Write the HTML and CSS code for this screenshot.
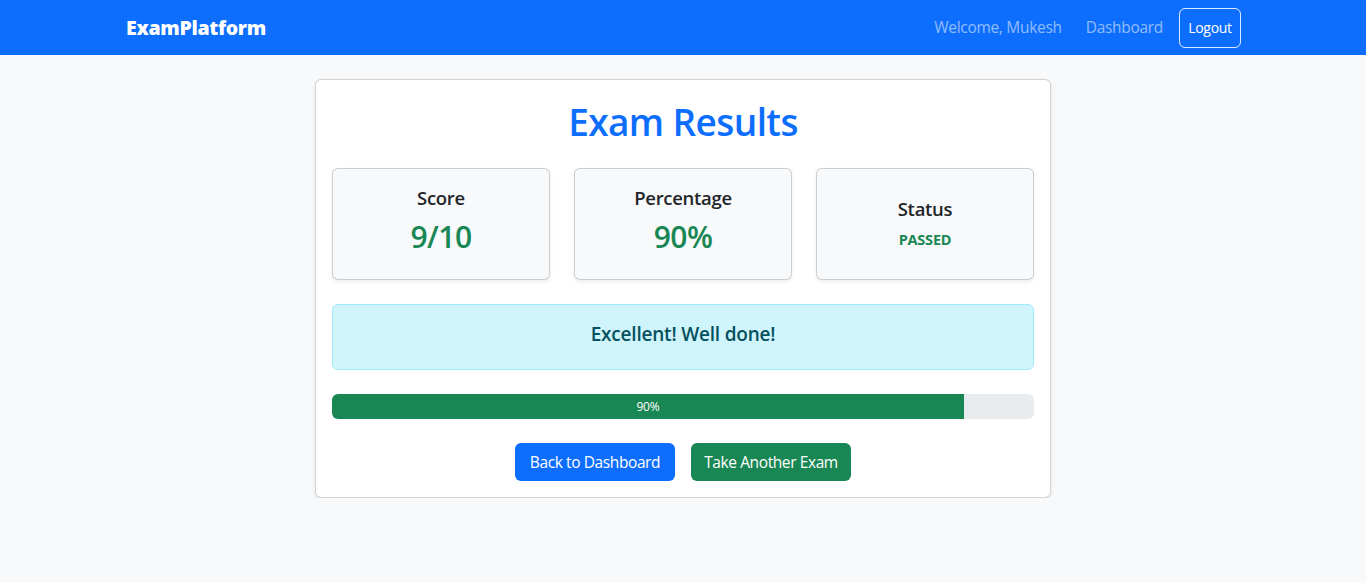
FILE: index.html
```html
<!DOCTYPE html>
<html lang="en">
<head>
<meta charset="utf-8">
<title>Exam Results</title>
<link rel="stylesheet" href="styles.css">
</head>
<body>
<nav class="navbar">
  <div class="container nav-inner">
    <a class="brand" href="#">ExamPlatform</a>
    <div class="nav-right">
      <span class="nav-text">Welcome, Mukesh</span>
      <a class="nav-link" href="#">Dashboard</a>
      <button class="btn-logout">Logout</button>
    </div>
  </div>
</nav>
<main class="container">
  <div class="card">
    <h1 class="title">Exam Results</h1>
    <div class="stats">
      <div class="stat">
        <h5 class="stat-label">Score</h5>
        <h2 class="stat-value">9/10</h2>
      </div>
      <div class="stat">
        <h5 class="stat-label">Percentage</h5>
        <h2 class="stat-value">90%</h2>
      </div>
      <div class="stat stat-center">
        <h5 class="stat-label">Status</h5>
        <p class="stat-status">PASSED</p>
      </div>
    </div>
    <div class="alert">
      <h4 class="alert-text">Excellent! Well done!</h4>
    </div>
    <div class="progress">
      <div class="progress-bar" style="width: 90%">90%</div>
    </div>
    <div class="actions">
      <a class="btn btn-primary" href="#">Back to Dashboard</a>
      <a class="btn btn-success" href="#">Take Another Exam</a>
    </div>
  </div>
</main>
</body>
</html>
```
FILE: styles.css
```css
* { box-sizing: border-box; }
html, body { margin: 0; }
body {
  font-family: "Open Sans", "Noto Sans", "Liberation Sans", sans-serif;
  font-size: 16px;
  line-height: 1.5;
  color: #212529;
  background: #f8f9fa;
}
h1, h2, h4, h5, p { margin: 0; font-weight: 500; }
a { text-decoration: none; }

.container {
  width: 1140px;
  margin: 0 auto;
  padding: 0 12px;
}

.navbar {
  background: #0d6efd;
  height: 55px;
}
.nav-inner {
  height: 55px;
  display: flex;
  align-items: center;
  justify-content: space-between;
}
.brand {
  color: #fff;
  font-weight: 800;
  font-size: 19.5px;
  letter-spacing: -0.3px;
  margin-left: 1px;
}
.nav-right {
  display: flex;
  align-items: center;
}
.nav-text, .nav-link {
  color: rgba(255, 255, 255, 0.55);
  font-size: 15.5px;
  letter-spacing: -0.3px;
}
.nav-text { margin-right: 24px; }
.nav-link { margin-right: 16px; }
.btn-logout {
  font-family: inherit;
  font-size: 14px;
  letter-spacing: -0.3px;
  color: #fff;
  background: transparent;
  border: 1px solid rgba(255, 255, 255, 0.85);
  border-radius: 6px;
  height: 40px;
  width: 62px;
  padding: 0;
}

.card {
  margin: 24px 0 0 190px;
  width: 736px;
  background: #fff;
  border: 1px solid rgba(0, 0, 0, 0.175);
  border-radius: 6px;
  box-shadow: 0 2px 4px rgba(0, 0, 0, 0.075);
  padding: 16px;
}
.title {
  color: #0d6efd;
  font-size: 37px;
  font-weight: 600;
  line-height: 48px;
  padding-top: 2px;
  height: 48px;
  text-align: center;
  letter-spacing: -0.6px;
  margin-bottom: 24px;
}
.stats {
  display: grid;
  grid-template-columns: repeat(3, 1fr);
  gap: 24px;
  margin-bottom: 24px;
}
.stat {
  background: #f8f9fa;
  border: 1px solid rgba(0, 0, 0, 0.175);
  border-radius: 6px;
  box-shadow: 0 2px 4px rgba(0, 0, 0, 0.075);
  padding: 17px 16px 16px;
  height: 112px;
  text-align: center;
}
.stat-center {
  display: flex;
  flex-direction: column;
  justify-content: center;
  padding-top: 16px;
}
.stat-label {
  font-size: 18.5px;
  font-weight: 600;
  line-height: 24px;
  letter-spacing: -0.3px;
  margin-bottom: 8px;
}
.stat-value {
  color: #198754;
  font-size: 30px;
  font-weight: 600;
  line-height: 38px;
  letter-spacing: -0.5px;
}
.stat-status {
  color: #198754;
  font-weight: 700;
  font-size: 14.5px;
  line-height: 22px;
  letter-spacing: -0.2px;
}
.alert {
  background: #cff4fc;
  border: 1px solid #9eeaf9;
  border-radius: 6px;
  color: #055160;
  height: 66px;
  display: flex;
  align-items: center;
  justify-content: center;
  margin-bottom: 24px;
}
.alert-text {
  font-size: 19px;
  font-weight: 600;
  letter-spacing: -0.2px;
  margin-top: -5px;
}
.progress {
  height: 25px;
  background: #e9ecef;
  border-radius: 6px;
  overflow: hidden;
  display: flex;
  margin-bottom: 24px;
}
.progress-bar {
  background: #198754;
  color: #fff;
  font-size: 12px;
  line-height: 25px;
  text-align: center;
  letter-spacing: -0.3px;
}
.actions {
  display: flex;
  justify-content: center;
  gap: 16px;
}
.btn {
  display: inline-flex;
  align-items: center;
  justify-content: center;
  width: 160px;
  height: 38px;
  padding-top: 2px;
  border-radius: 6px;
  color: #fff;
  font-size: 15.5px;
  letter-spacing: -0.4px;
}
.btn-primary { background: #0d6efd; }
.btn-success { background: #198754; }
```
